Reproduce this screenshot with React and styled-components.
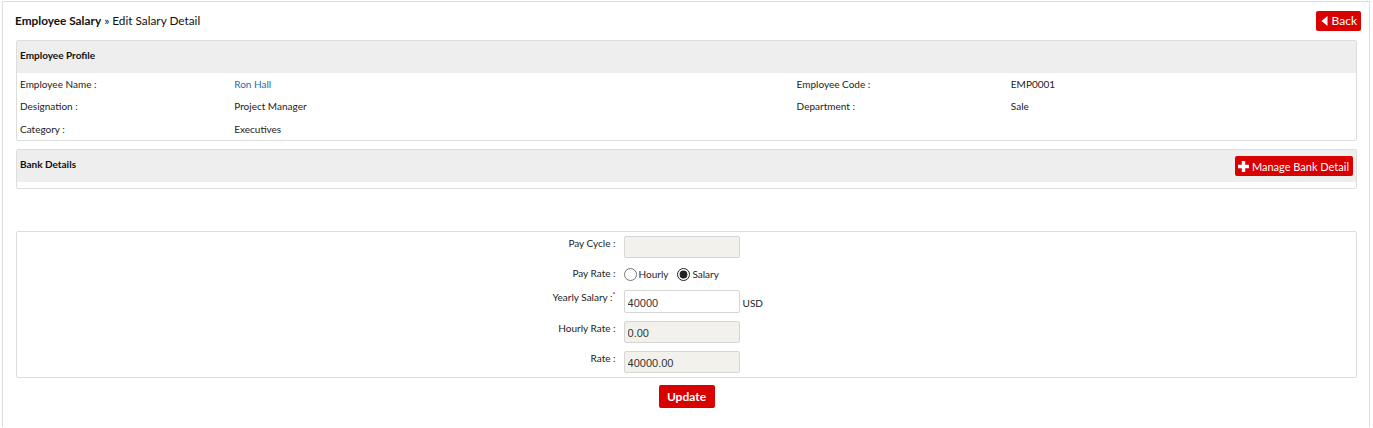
import React from "react";
import styled, { createGlobalStyle } from "styled-components";

const GlobalStyle = createGlobalStyle`
  html, body {
    margin: 0;
    padding: 0;
    background: #fff;
  }
  body {
    font-family: Lato, "Open Sans", sans-serif;
    color: #222;
  }
`;

const profile = [
  ["Employee Name :", "Ron Hall", "Employee Code :", "EMP0001", true],
  ["Designation :", "Project Manager", "Department :", "Sale"],
  ["Category :", "Executives", "", ""],
];

function CaretLeft() {
  return (
    <svg width="7" height="10" viewBox="0 0 7 10">
      <path d="M6.5 0 L0.5 5 L6.5 10 Z" fill="#fff" />
    </svg>
  );
}

function Plus() {
  return (
    <svg width="11" height="11" viewBox="0 0 11 11">
      <path d="M3.8 0h3.4v3.8H11v3.4H7.2V11H3.8V7.2H0V3.8h3.8z" fill="#fff" />
    </svg>
  );
}

export default function App() {
  return (
    <>
      <GlobalStyle />
      <Page>
        <Header>
          <Title>
            <b>Employee Salary</b> » Edit Salary Detail
          </Title>
          <RedButton>
            <CaretLeft />
            Back
          </RedButton>
        </Header>

        <Panel>
          <PanelHead>
            <PanelTitle>Employee Profile</PanelTitle>
          </PanelHead>
          <InfoTable>
            <colgroup>
              <col style={{ width: "16%" }} />
              <col style={{ width: "42%" }} />
              <col style={{ width: "16%" }} />
              <col />
            </colgroup>
            <tbody>
              {profile.map(([l1, v1, l2, v2, link]) => (
                <tr key={l1}>
                  <td>{l1}</td>
                  <td>{link ? <Link>{v1}</Link> : v1}</td>
                  <td>{l2}</td>
                  <td>{v2}</td>
                </tr>
              ))}
            </tbody>
          </InfoTable>
        </Panel>

        <Panel $gap="8px">
          <PanelHead>
            <PanelTitle>Bank Details</PanelTitle>
            <RedButton $small>
              <Plus />
              Manage Bank Detail
            </RedButton>
          </PanelHead>
          <PanelFoot />
        </Panel>

        <FormPanel>
          <FormRow>
            <Label>Pay Cycle :</Label>
            <Field>
              <Input disabled />
            </Field>
          </FormRow>
          <FormRow>
            <Label>Pay Rate :</Label>
            <Field>
              <RadioLabel>
                <input type="radio" name="rate" /> Hourly
              </RadioLabel>
              <RadioLabel>
                <input type="radio" name="rate" defaultChecked /> Salary
              </RadioLabel>
            </Field>
          </FormRow>
          <FormRow>
            <Label>
              Yearly Salary :<Req>*</Req>
            </Label>
            <Field>
              <Input $tall defaultValue="40000" />
              <Unit>USD</Unit>
            </Field>
          </FormRow>
          <FormRow>
            <Label>Hourly Rate :</Label>
            <Field>
              <Input disabled defaultValue="0.00" />
            </Field>
          </FormRow>
          <FormRow>
            <Label>Rate :</Label>
            <Field>
              <Input disabled defaultValue="40000.00" />
            </Field>
          </FormRow>
        </FormPanel>

        <Actions>
          <UpdateButton>Update</UpdateButton>
        </Actions>
      </Page>
    </>
  );
}

const Page = styled.div`
  margin: 1px 3px 0 2px;
  border: 1px solid #ddd;
  border-bottom: none;
  height: 426px;
  box-sizing: border-box;
  padding: 0 12px 0 13px;
`;

const Header = styled.div`
  display: flex;
  justify-content: space-between;
  align-items: center;
  height: 38px;
  margin-right: -4px;
  padding-bottom: 1px;
  box-sizing: border-box;
`;

const Title = styled.div`
  font-size: 11.8px;
  color: #111;
  margin-left: -1px;

  b {
    font-weight: 700;
  }
`;

const RedButton = styled.button`
  display: inline-flex;
  align-items: center;
  gap: ${(p) => (p.$small ? "3px" : "4px")};
  height: 20px;
  padding: ${(p) => (p.$small ? "0 4px 0 3px" : "0 4px 0 5px")};
  border: none;
  border-radius: 2px;
  background: #d90000;
  color: #fff;
  font-family: Lato, sans-serif;
  font-size: ${(p) => (p.$small ? "11px" : "12px")};
  cursor: pointer;
`;

const Panel = styled.div`
  border: 1px solid #ddd;
  border-radius: 2px;
  margin-top: ${(p) => p.$gap || "0"};
`;

const PanelHead = styled.div`
  display: flex;
  justify-content: space-between;
  align-items: flex-start;
  min-height: 32px;
  box-sizing: border-box;
  padding: 6px 3px 6px 3px;
  background: #eeeeee;
`;

const PanelTitle = styled.div`
  font-size: 10px;
  font-weight: 700;
  line-height: 16px;
  color: #111;
`;

const PanelFoot = styled.div`
  height: 6px;
`;

const InfoTable = styled.table`
  width: 100%;
  border-collapse: collapse;
  table-layout: fixed;

  td {
    font-size: 10px;
    color: #222;
    height: 22px;
    padding: 0 3px;
    line-height: 14px;
  }

  tr:last-child td {
    height: 23px;
  }
`;

const Link = styled.span`
  color: #1c6ab0;
`;

const FormPanel = styled.div`
  margin-top: 42px;
  border: 1px solid #ddd;
  border-radius: 2px;
`;

const FormRow = styled.div`
  display: grid;
  grid-template-columns: 45% 1fr;
  padding: 4px 0;
`;

const Label = styled.div`
  text-align: right;
  padding-right: 4px;
  font-size: 10px;
  line-height: 14px;
  color: #222;
`;

const Req = styled.sup`
  color: #d90000;
  font-size: 7px;
  line-height: 0;
  vertical-align: 3px;
`;

const Field = styled.div`
  display: flex;
  align-items: center;
  padding-left: 4px;
  min-height: 16px;
`;

const Input = styled.input`
  width: 116px;
  height: ${(p) => (p.$tall ? "23px" : "22px")};
  box-sizing: border-box;
  border: 1px solid #d6d6d6;
  border-radius: 2px;
  padding: 2px 3px 0;
  font-family: "Liberation Sans", Arial, sans-serif;
  font-size: 11px;
  color: #333;
  background: #fff;

  &:disabled {
    background: #f2f1eb;
    color: #333;
  }
`;

const RadioLabel = styled.label`
  display: inline-flex;
  align-items: flex-end;
  font-size: 10px;
  color: #222;
  margin-right: 9px;
  line-height: 14px;

  input {
    margin: 0 2px 0 0;
    width: 13px;
    height: 13px;
    accent-color: #222;
  }
`;

const Unit = styled.span`
  font-size: 10px;
  margin-left: 3px;
  padding-top: 2px;
  color: #222;
`;

const Actions = styled.div`
  display: flex;
  justify-content: center;
  margin-top: 7px;
`;

const UpdateButton = styled.button`
  width: 56px;
  height: 23px;
  border: none;
  border-radius: 2px;
  background: #d90000;
  color: #fff;
  font-family: Lato, sans-serif;
  font-weight: 700;
  font-size: 12px;
  cursor: pointer;
`;
